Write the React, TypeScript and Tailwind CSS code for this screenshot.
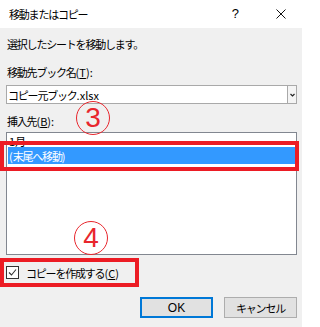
const font = "font-['Noto_Sans_CJK_JP','Noto_Sans',sans-serif]"

const CircledNumber = ({ n, className }: { n: string; className: string }) => (
  <div
    className={`absolute w-[34px] h-[34px] rounded-full border-[1.5px] border-[#e8262d] flex items-center justify-center text-[#e8262d] font-['Liberation_Sans',sans-serif] text-[28px] leading-none tracking-normal ${className}`}
  >
    <span className="-mt-[1px]">{n}</span>
  </div>
)

// Latin parts keep normal spacing; only the Japanese text is tightened
const L = ({ children }: { children: React.ReactNode }) => (
  <span className="tracking-normal">{children}</span>
)

export default function App() {
  return (
    <div className={`relative w-[302px] h-[327px] overflow-hidden bg-[#f0f0f0] text-[11px] text-black tracking-[-1.2px] ${font}`}>
      {/* Title bar */}
      <div className="h-[28px] bg-white flex items-center pl-[9px] pr-[16px]">
        <span className="leading-[16px]">移動またはコピー</span>
        <span className="ml-auto font-['Liberation_Sans',sans-serif] text-[13px] tracking-normal">?</span>
        <svg className="ml-[37px] w-[10px] h-[10px]" viewBox="0 0 10 10" fill="none" stroke="#111" strokeWidth={1}>
          <path d="M0.5 0.5 L9.5 9.5 M9.5 0.5 L0.5 9.5" />
        </svg>
      </div>

      {/* Body */}
      <div className="pl-[6px] pr-[5px] flex flex-col">
        <div className="mt-[8px] pl-[1px] leading-[16px]">選択したシートを移動します。</div>

        <div className="mt-[12px] pl-[1px] leading-[16px]">
          移動先ブック名<L>(<span className="underline">T</span>):</L>
        </div>

        {/* Combo box */}
        <div className="mt-[5px] h-[19px] flex bg-white border border-[#a9a9a9]">
          <div className="flex-1 flex items-center pl-[1px] leading-[16px]">
            コピー元ブック<L>.xlsx</L>
          </div>
          <div className="w-[9px] border-l border-[#a9a9a9] bg-[#f4f4f4] flex items-center justify-center">
            <svg className="w-[5px] h-[4px]" viewBox="0 0 5 4" fill="none" stroke="#222" strokeWidth={1.2}>
              <path d="M0.5 1 L2.5 3 L4.5 1" />
            </svg>
          </div>
        </div>

        <div className="mt-[9px] pl-[1px] leading-[16px]">
          挿入先<L>(<span className="underline">B</span>):</L>
        </div>

        {/* List box */}
        <div className="mt-[3px] h-[123px] bg-white border border-[#828790] p-[1px]">
          <div className="h-[13px] flex items-center pl-[1px] leading-[14px]">
            <L>1</L>月
          </div>
          <div className="h-[17px] flex items-center pl-[1px] bg-[#3399ff] text-white leading-[16px]">
            <L>(</L>末尾へ移動<L>)</L>
          </div>
        </div>

        {/* Checkbox */}
        <div className="mt-[11px] h-[13px] flex items-center">
          <div className="w-[13px] h-[13px] border border-[#333] bg-white flex items-center justify-center">
            <svg className="w-[9px] h-[9px]" viewBox="0 0 9 9" fill="none" stroke="#333" strokeWidth={1.1}>
              <path d="M1 4.5 L3.5 7 L8 1.5" />
            </svg>
          </div>
          <span className="ml-[7px] leading-[16px]">
            コピーを作成する<L>(<span className="underline">C</span>)</L>
          </span>
        </div>

        {/* Buttons */}
        <div className="mt-[18px] flex justify-end gap-[11px]">
          <button className="w-[73px] h-[21px] bg-[#e1e1e1] border-2 border-[#0078d7] flex items-center justify-center font-['Liberation_Sans',sans-serif] text-[12px] tracking-normal">
            OK
          </button>
          <button className="w-[73px] h-[21px] bg-[#e1e1e1] border border-[#adadad] flex items-center justify-center leading-[16px]">
            キャンセル
          </button>
        </div>
      </div>

      {/* Annotations */}
      <div className="absolute left-0 top-[141px] w-[299px] h-[30px] border-4 border-[#ec1c24]" />
      <div className="absolute left-0 top-[258px] w-[139px] h-[29px] border-4 border-[#ec1c24]" />
      <CircledNumber n="3" className="left-[76px] top-[101px]" />
      <CircledNumber n="4" className="left-[74px] top-[221px]" />
    </div>
  )
}
